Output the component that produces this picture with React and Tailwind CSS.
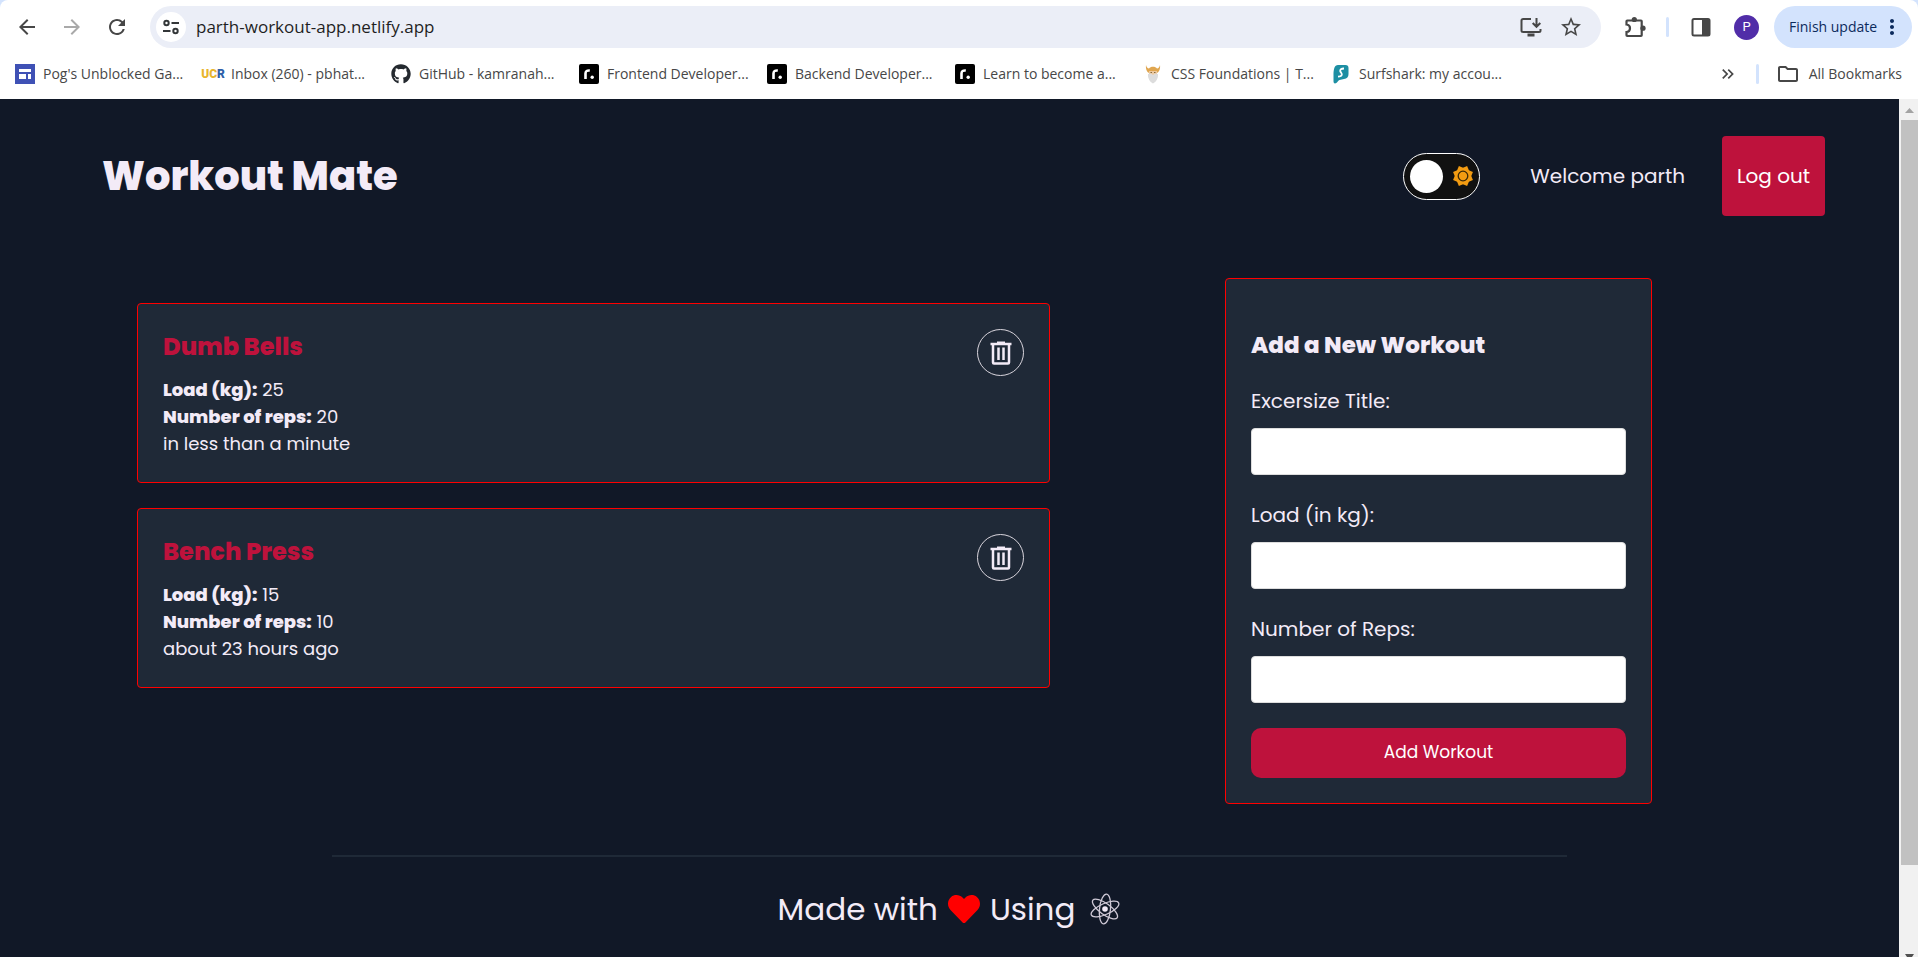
import React, { useState } from "react";
import {
  MdArrowBack,
  MdArrowForward,
  MdRefresh,
  MdStarOutline,
  MdMoreVert,
  MdKeyboardDoubleArrowRight,
  MdOutlineFolder,
} from "react-icons/md";
import { FaGithub, FaHeart } from "react-icons/fa";

function TuneIcon() {
  return (
    <svg viewBox="0 0 18 18" className="size-[18px]" fill="none" stroke="#333638" strokeWidth="2">
      <circle cx="4.5" cy="5" r="2.2" />
      <path d="M9.5 5H17" />
      <circle cx="13.5" cy="13" r="2.2" />
      <path d="M1 13h7.5" />
    </svg>
  );
}

function InstallIcon() {
  return (
    <svg viewBox="0 0 24 24" className="size-6" fill="none" stroke="#474747" strokeWidth="2">
      <path d="M12 4H4.2C3 4 2.5 4.600 2.500 5.500V15.500C2.500 16.500 3 17 4.200 17H20C21 17 21.500 16.500 21.500 15.500V14" />
      <path d="M8.500 20H15.500" strokeWidth="3" />
      <path d="M17.500 3V11.500M13.700 8L17.500 11.800L21.300 8" />
    </svg>
  );
}

function PuzzleIcon() {
  return (
    <svg viewBox="0 0 24 24" className="size-6" fill="none">
      <path
        d="M4.200 5.500H18Q18.700 5.500 18.700 6.200V20.300Q18.700 21 18 21H4.200Q3.500 21 3.500 20.300V17C6 16.800 7 15 7 13.200C7 11.400 6 9.700 3.500 9.500V6.200Q3.500 5.500 4.200 5.500Z"
        stroke="#474747"
        strokeWidth="2.200"
      />
      <circle cx="11.300" cy="4.500" r="2.600" fill="#474747" />
      <circle cx="20" cy="13.200" r="2.600" fill="#474747" />
    </svg>
  );
}

function SidePanelIcon() {
  return (
    <svg viewBox="0 0 20 20" className="size-5" fill="none">
      <rect x="1.500" y="2" width="17" height="16.500" rx="1.500" stroke="#474747" strokeWidth="2" />
      <rect x="11" y="2" width="7.500" height="16.500" fill="#474747" />
    </svg>
  );
}

function SiteIcon() {
  return (
    <svg viewBox="0 0 20 20" className="size-5">
      <rect width="20" height="20" fill="#3f51b5" />
      <path d="M4 5h12v3H4zM4 10h7v5H4zM13 10h3v5h-3z" fill="#fff" />
    </svg>
  );
}

function UcrIcon() {
  return (
    <span className="font-['Roboto','Liberation_Sans',sans-serif] text-xs leading-5 font-black text-[#e8b52c]">
      UC<span className="text-[#2e5fa8]">R</span>
    </span>
  );
}

function RoadmapIcon() {
  return (
    <svg viewBox="0 0 20 20" className="size-5">
      <rect width="20" height="20" rx="2" fill="#000" />
      <path d="M6.500 15V9.500C6.500 7 8 6.300 10.800 6.500" fill="none" stroke="#fff" strokeWidth="2.600" />
      <circle cx="13.200" cy="13.300" r="1.700" fill="#fff" />
    </svg>
  );
}

function OdinIcon() {
  return (
    <svg viewBox="0 0 20 20" className="size-5">
      <path d="M3 1C2.500 5 4 8 6 9H14C16 8 17.500 5 17 1C16.500 3 15.500 4.500 14 4.500C12.500 2 7.500 2 6 4.500C4.500 4.500 3.500 3 3 1Z" fill="#e0a64f" />
      <path d="M6 7H14V12H6Z" fill="#ecc9a0" />
      <path d="M5 10L8 9.500L10 11L12 9.500L15 10C15.500 14 13 18 10 19.500C7 18 4.500 14 5 10Z" fill="#dcdcdc" />
      <path d="M7.500 8.500H9M11 8.500H12.500" stroke="#8a6a3c" />
    </svg>
  );
}

function SurfsharkIcon() {
  return (
    <svg viewBox="0 0 20 20" className="size-5">
      <path d="M7 1H14.500Q17.500 1 17.500 4V10C17.500 13 16 14.500 13 15L8.500 16C7 16.500 6 19.500 4 19.500Q2.500 19.500 2.500 17.500V11C2.500 5 3.500 1 7 1Z" fill="#1d8fa3" />
      <path d="M13 4.500C10 4.500 9 5.500 9.200 7C9.500 8.500 11 9 10.800 10.700C10.600 12 9 12.700 7 12.700" fill="none" stroke="#fff" strokeWidth="1.800" />
    </svg>
  );
}

function SunIcon() {
  return (
    <svg viewBox="-11 -11 22 22" className="size-[22px]">
      <g fill="#f39c12">
        <rect x="-7.600" y="-7.600" width="15.200" height="15.200" transform="rotate(22.500)" />
        <rect x="-7.600" y="-7.600" width="15.200" height="15.200" transform="rotate(67.500)" />
      </g>
      <circle r="4.800" fill="none" stroke="#3a2808" strokeWidth="1.300" />
    </svg>
  );
}

function TrashIcon() {
  return (
    <svg viewBox="0 0 24 24" className="size-6" fill="none" stroke="#f3ebf7" strokeWidth="2">
      <path d="M1.500 3H22.500" strokeWidth="2.500" />
      <path d="M8 1.500H16" />
      <path d="M4 3V21.500Q4 22.500 5 22.500H19Q20 22.500 20 21.500V3" strokeWidth="2.500" />
      <path d="M9.500 6.500V19M14.500 6.500V19" strokeWidth="2.500" />
    </svg>
  );
}

function AtomIcon() {
  return (
    <svg viewBox="-16 -16 32 32" className="size-8" fill="none" stroke="#cfc9d6" strokeWidth="1.300">
      <g transform="rotate(6)">
        <ellipse rx="5.500" ry="15" />
        <ellipse rx="5.500" ry="15" transform="rotate(60)" />
        <ellipse rx="5.500" ry="15" transform="rotate(120)" />
      </g>
      <circle r="2.800" fill="#f3ebf7" stroke="none" />
    </svg>
  );
}

const bookmarks = [
  { label: "Pog's Unblocked Ga...", icon: <SiteIcon /> },
  { label: "Inbox (260) - pbhat...", icon: <UcrIcon /> },
  { label: "GitHub - kamranah...", icon: <FaGithub className="size-5 text-[#24292f]" /> },
  { label: "Frontend Developer...", icon: <RoadmapIcon /> },
  { label: "Backend Developer...", icon: <RoadmapIcon /> },
  { label: "Learn to become a...", icon: <RoadmapIcon /> },
  { label: "CSS Foundations | T...", icon: <OdinIcon /> },
  { label: "Surfshark: my accou...", icon: <SurfsharkIcon /> },
];

const workouts = [
  { title: "Dumb Bells", load: 25, reps: 20, when: "in less than a minute" },
  { title: "Bench Press", load: 15, reps: 10, when: "about 23 hours ago" },
];

const fields = [
  { id: "title", label: "Excersize Title:", type: "text" },
  { id: "load", label: "Load (in kg):", type: "number" },
  { id: "reps", label: "Number of Reps:", type: "number" },
];

function BrowserBar() {
  return (
    <div className="shrink-0 bg-[#d3e3fd] font-['Open_Sans','Noto_Sans',sans-serif]">
      <div className="rounded-t-lg bg-white">
        <div className="flex h-[54px] items-center pr-[6px] pl-[15px] text-[#474747]">
          <div className="flex items-center gap-[21px]">
            <button aria-label="Back"><MdArrowBack className="size-6" /></button>
            <button aria-label="Forward" className="text-[#a9a9a9]"><MdArrowForward className="size-6" /></button>
            <button aria-label="Reload"><MdRefresh className="size-6" /></button>
          </div>
          <div className="ml-[21px] flex h-[42px] flex-1 items-center rounded-full bg-[#ebeef7] pr-[18px] pl-[6px]">
            <button aria-label="Site information" className="flex size-[30px] items-center justify-center rounded-full bg-white">
              <TuneIcon />
            </button>
            <input
              aria-label="Address"
              defaultValue="parth-workout-app.netlify.app"
              className="ml-[10px] min-w-0 flex-1 bg-transparent text-[17px] text-[#1f1f1f] outline-none"
            />
            <div className="flex items-center gap-4">
              <button aria-label="Install app"><InstallIcon /></button>
              <button aria-label="Bookmark this page"><MdStarOutline className="size-6" /></button>
            </div>
          </div>
          <div className="ml-[22px] flex items-center">
            <button aria-label="Extensions"><PuzzleIcon /></button>
            <div className="mr-[22px] ml-[19px] h-5 w-[3px] rounded-full bg-[#d3e3fd]" />
            <button aria-label="Side panel"><SidePanelIcon /></button>
            <button aria-label="Profile" className="ml-[23px] size-[25px] rounded-full bg-[#512da8] font-['Roboto',sans-serif] text-[13px] text-white">
              P
            </button>
            <button className="ml-[15px] flex h-[42px] w-[138px] items-center justify-between rounded-full bg-[#d3e3fd] pr-2 pl-[15px] text-sm text-[#0b2a5c]">
              Finish update
              <MdMoreVert className="size-6" />
            </button>
          </div>
        </div>
        <div className="flex h-[45px] items-center justify-between pr-[16px] pb-[6px] pl-[15px] text-sm text-[#474747]">
          <nav className="flex min-w-0 overflow-hidden">
            {bookmarks.map((b) => (
              <a key={b.label} href="#" className="flex w-[188px] shrink-0 items-center gap-2 whitespace-nowrap">
                <span className="flex w-5 shrink-0 justify-center">{b.icon}</span>
                {b.label}
              </a>
            ))}
          </nav>
          <div className="flex shrink-0 items-center">
            <button aria-label="More bookmarks"><MdKeyboardDoubleArrowRight className="size-5" /></button>
            <div className="mr-[17px] ml-[18px] h-5 w-[3px] rounded-full bg-[#d3e3fd]" />
            <button className="flex items-center gap-[9px]">
              <MdOutlineFolder className="size-6" />
              All Bookmarks
            </button>
          </div>
        </div>
      </div>
    </div>
  );
}

function WorkoutCard({ workout }) {
  return (
    <article className="flex items-start justify-between rounded border border-[#ff0000] bg-[#1f2937] p-[25px]">
      <div>
        <h2 className="text-2xl leading-9 font-extrabold text-[#be123c]">{workout.title}</h2>
        <div className="mt-[11px] text-lg leading-[27px]">
          <p><strong className="font-extrabold">Load (kg):</strong> {workout.load}</p>
          <p><strong className="font-extrabold">Number of reps:</strong> {workout.reps}</p>
          <p>{workout.when}</p>
        </div>
      </div>
      <button
        aria-label={`Delete ${workout.title}`}
        className="flex size-[47px] items-center justify-center rounded-full border border-[#d9d5dd]"
      >
        <TrashIcon />
      </button>
    </article>
  );
}

function ThemeSwitch() {
  const [light, setLight] = useState(false);
  return (
    <label className="flex h-[47px] w-[77px] cursor-pointer items-center justify-between rounded-full border border-white bg-[#111] pr-[5px] pl-[6px]">
      <input
        type="checkbox"
        aria-label="Light theme"
        checked={light}
        onChange={() => setLight(!light)}
        className="sr-only"
      />
      <span className="size-[33px] rounded-full bg-white" />
      <SunIcon />
    </label>
  );
}

function ScrollTrack() {
  return (
    <div className="flex w-[19px] shrink-0 flex-col items-center bg-[#f1f1f1] pl-[2px]" aria-hidden="true">
      <svg viewBox="0 0 17 21" className="h-[21px] w-[17px] shrink-0">
        <path d="M4 14L8.500 9L13 14Z" fill="#a3a3a3" />
      </svg>
      <div className="w-full flex-[745] bg-[#c1c1c1]" />
      <div className="flex-[89]" />
      <svg viewBox="0 0 17 3" className="h-[3px] w-[17px] shrink-0">
        <path d="M4 0H13L11 3H6Z" fill="#505050" />
      </svg>
    </div>
  );
}

export default function App() {
  return (
    <div className="flex h-screen flex-col overflow-hidden">
      <BrowserBar />
      <div className="flex min-h-0 flex-1">
        <div className="min-w-0 flex-1 overflow-hidden bg-[#111827] font-['Poppins','Inter',sans-serif] text-[#f3ebf7]">
          <header className="flex items-center justify-between pt-[37px] pr-[74px] pl-[102px]">
            <h1 className="text-[40px] leading-[60px] font-extrabold">Workout Mate</h1>
            <div className="flex items-center text-xl">
              <ThemeSwitch />
              <span className="ml-[50px] whitespace-nowrap">Welcome parth</span>
              <button className="ml-[37px] h-20 w-[103px] rounded bg-[#be123c] text-white">Log out</button>
            </div>
          </header>

          <main className="mt-[62px] grid grid-cols-[913fr_427fr] items-start gap-x-[175px] pr-[247px] pl-[137px]">
            <section className="mt-[25px] flex flex-col gap-[25px]">
              {workouts.map((w) => (
                <WorkoutCard key={w.title} workout={w} />
              ))}
            </section>

            <form className="rounded border border-[#ff0000] bg-[#1f2937] px-[25px] pt-12 pb-[25px]" onSubmit={(e) => e.preventDefault()}>
              <h2 className="mb-[23px] text-[23px] leading-9 font-extrabold">Add a New Workout</h2>
              {fields.map((f) => (
                <div key={f.id} className="mb-[25px]">
                  <label htmlFor={f.id} className="mb-3 block text-xl leading-[30px]">{f.label}</label>
                  <input
                    id={f.id}
                    type={f.type}
                    className="block h-[47px] w-full rounded border border-[#ddd] bg-white px-[10px] text-black"
                  />
                </div>
              ))}
              <button className="block h-[50px] w-full rounded-[10px] bg-[#be123c] text-[17px] text-white">Add Workout</button>
            </form>
          </main>

          <hr className="mx-auto mt-[51px] w-[65%] border-t-2 border-[#1f2937]" />
          <footer className="mt-7 flex items-center justify-center text-[31px] leading-[48px]">
            <span>Made with</span>
            <FaHeart className="mx-[10px] size-8 text-[#ff0000]" />
            <span>Using</span>
            <span className="ml-[14px]"><AtomIcon /></span>
          </footer>
        </div>
        <ScrollTrack />
      </div>
    </div>
  );
}
